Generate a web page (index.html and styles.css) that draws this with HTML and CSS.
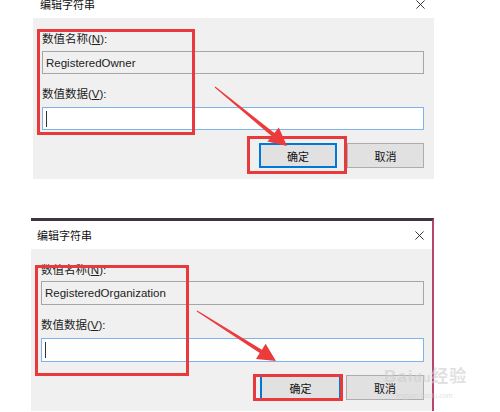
FILE: index.html
```html
<!DOCTYPE html>
<html lang="zh-CN">

<head>
    <meta charset="UTF-8">
    <meta name="viewport" content="width=device-width, initial-scale=1.0">
    <title>编辑字符串</title>
    <link rel="stylesheet" href="styles.css">
</head>

<body>
    <div class="page">
        <section class="dialog dialog-top">
            <header class="titlebar">
                <span class="title">编辑字符串</span>
                <svg class="close" viewBox="0 0 10 10" width="9" height="9">
                    <path d="M0.5 0.5 L9.5 9.5 M9.5 0.5 L0.5 9.5" stroke="#222" stroke-width="1" fill="none" />
                </svg>
            </header>
            <div class="dialog-body">
                <div class="label">数值名称(<u>N</u>):</div>
                <div class="textbox readonly">RegisteredOwner</div>
                <div class="label label-data">数值数据(<u>V</u>):</div>
                <div class="textbox editable"><span class="caret"></span></div>
                <div class="buttons">
                    <button class="btn btn-ok">确定</button>
                    <button class="btn">取消</button>
                </div>
            </div>
        </section>

        <section class="dialog dialog-bottom">
            <header class="titlebar">
                <span class="title">编辑字符串</span>
                <svg class="close" viewBox="0 0 10 10" width="9" height="9">
                    <path d="M0.5 0.5 L9.5 9.5 M9.5 0.5 L0.5 9.5" stroke="#222" stroke-width="1" fill="none" />
                </svg>
            </header>
            <div class="dialog-body">
                <div class="label">数值名称(<u>N</u>):</div>
                <div class="textbox readonly">RegisteredOrganization</div>
                <div class="label label-data">数值数据(<u>V</u>):</div>
                <div class="textbox editable"><span class="caret"></span></div>
                <div class="buttons">
                    <button class="btn btn-ok">确定</button>
                    <button class="btn">取消</button>
                </div>
            </div>
        </section>

        <!-- red annotation boxes -->
        <div class="mark mark-fields-1"></div>
        <div class="mark mark-ok-1"></div>
        <div class="mark mark-fields-2"></div>
        <div class="mark mark-ok-2"></div>

        <svg class="arrows" viewBox="0 0 500 412" width="500" height="412">
            <polygon fill="#ec3b3b"
                points="215.3,86.6 274.4,133.1 278.8,127.6 287,146 267.4,141.6 271.8,136.2 214.7,87.4" />
            <polygon fill="#ec3b3b"
                points="197.3,310.6 261.9,349.7 265.6,343.8 276,361 256,359 259.7,353.1 196.7,311.4" />
        </svg>

        <div class="watermark">
            <span class="wm-brand">Bai<span class="wm-paw">du</span>经验</span>
            <span class="wm-url">jingyan.baidu.com</span>
        </div>
    </div>
</body>

</html>
```

FILE: styles.css
```css
* {
    box-sizing: border-box;
}

body {
    margin: 0;
    background: #fff;
    font-family: 'Liberation Sans', 'Noto Sans CJK SC', sans-serif;
    color: #000;
    overflow: hidden;
}

.page {
    position: relative;
    width: 500px;
    height: 412px;
    overflow: hidden;
}

.dialog {
    background: #fff;
}

.dialog-top {
    margin-top: -10px;
    margin-left: 33px;
    width: 401px;
}

.dialog-bottom {
    margin-top: 39px;
    margin-left: 31px;
    width: 403px;
    border-top: 3px solid #3d3540;
    border-right: 2px solid #b9466a;
}

.titlebar {
    display: flex;
    align-items: center;
    justify-content: space-between;
    height: 28px;
    padding: 0 9px 0 7px;
}

.dialog-bottom .titlebar {
    padding: 0 8px 0 6px;
}

.title {
    font-size: 11px;
    color: #111;
}

.dialog-body {
    background: #f0f0f0;
    padding: 13px 10px 11px 9px;
    display: flex;
    flex-direction: column;
}

.dialog-bottom .dialog-body {
    padding-left: 10px;
    padding-right: 8px;
}

.label {
    font-size: 11.5px;
    line-height: 16px;
    color: #222;
}

.label-data {
    margin-top: 12px;
}

.textbox {
    height: 23px;
    margin-top: 4px;
    padding: 0 3px;
    display: flex;
    align-items: center;
    font-size: 11.5px;
    color: #222;
}

.dialog-bottom .textbox {
    height: 24px;
    margin-top: 3px;
}

.textbox.readonly {
    background: #f0f0f0;
    border: 1px solid #a6a6a6;
}

.textbox.editable {
    background: #fff;
    border: 1px solid #7eb4ea;
    margin-top: 5px;
}

.caret {
    width: 1px;
    height: 16px;
    background: #333;
}

.buttons {
    display: flex;
    justify-content: flex-end;
    gap: 10px;
    margin-top: 13px;
}

.dialog-bottom .buttons {
    gap: 5px;
}

.btn {
    width: 77px;
    height: 25px;
    background: #e1e1e1;
    border: 1px solid #adadad;
    font-family: 'Noto Sans CJK SC', sans-serif;
    font-size: 11px;
    color: #111;
    padding: 0;
}

.btn-ok {
    width: 78px;
    border: 2px solid #0078d7;
}

.dialog-bottom .btn {
    width: 78px;
}

.dialog-bottom .btn-ok {
    width: 81px;
}

.mark {
    position: absolute;
    border: 3px solid #e8393c;
}

.mark-fields-1 {
    left: 37px;
    top: 29px;
    width: 158px;
    height: 106px;
}

.mark-ok-1 {
    left: 247px;
    top: 136px;
    width: 100px;
    height: 38px;
}

.mark-fields-2 {
    left: 35px;
    top: 265px;
    width: 154px;
    height: 111px;
}

.mark-ok-2 {
    left: 253px;
    top: 374px;
    width: 90px;
    height: 27px;
}

.arrows {
    position: absolute;
    left: 0;
    top: 0;
    pointer-events: none;
}

.watermark {
    position: absolute;
    left: 384px;
    top: 368px;
    display: flex;
    flex-direction: column;
    gap: 5px;
    color: rgba(205, 205, 205, 0.6);
    pointer-events: none;
}

.wm-brand {
    font-size: 17px;
    font-weight: bold;
    line-height: 18px;
    letter-spacing: 1px;
}

.wm-paw {
    font-size: 13px;
}

.wm-url {
    font-size: 7px;
    line-height: 8px;
    margin-left: 12px;
}
```
